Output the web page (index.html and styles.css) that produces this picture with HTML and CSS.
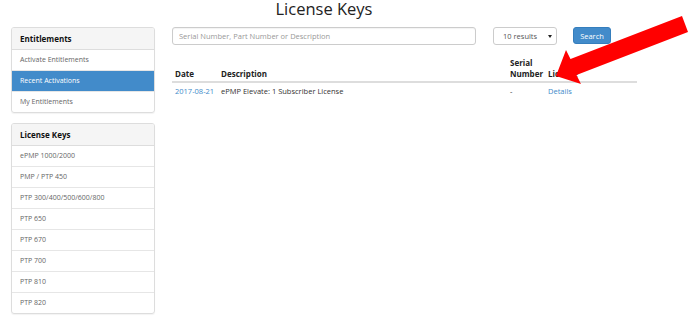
FILE: index.html
```html
<!DOCTYPE html>
<html lang="en">
<head>
  <meta charset="UTF-8">
  <title>License Keys</title>
  <link rel="stylesheet" href="styles.css">
</head>
<body>

<div class="page">
  <!-- Sidebar -->
  <div class="sidebar">
    <div class="panel">
      <div class="panel-heading">Entitlements</div>
      <a class="list-item" href="#">Activate Entitlements</a>
      <a class="list-item active" href="#">Recent Activations</a>
      <a class="list-item" href="#">My Entitlements</a>
    </div>

    <div class="panel">
      <div class="panel-heading">License Keys</div>
      <a class="list-item" href="#">ePMP 1000/2000</a>
      <a class="list-item" href="#">PMP / PTP 450</a>
      <a class="list-item" href="#">PTP 300/400/500/600/800</a>
      <a class="list-item" href="#">PTP 650</a>
      <a class="list-item" href="#">PTP 670</a>
      <a class="list-item" href="#">PTP 700</a>
      <a class="list-item" href="#">PTP 810</a>
      <a class="list-item" href="#">PTP 820</a>
    </div>
  </div>

  <!-- Main content -->
  <div class="main">
    <h1 class="title">License Keys</h1>

    <form class="search-row">
      <input class="search-input" type="text" placeholder="Serial Number, Part Number or Description">
      <div class="select">
        <span>10 results</span>
        <span class="caret"></span>
      </div>
      <button class="btn" type="submit">Search</button>
    </form>

    <table class="results">
      <colgroup>
        <col class="c-date">
        <col class="c-desc">
        <col class="c-serial">
        <col class="c-license">
      </colgroup>
      <thead>
        <tr>
          <th>Date</th>
          <th>Description</th>
          <th>Serial Number</th>
          <th>License</th>
        </tr>
      </thead>
      <tbody>
        <tr>
          <td><a href="#">2017-08-21</a></td>
          <td>ePMP Elevate: 1 Subscriber License</td>
          <td>-</td>
          <td><a href="#">Details</a></td>
        </tr>
      </tbody>
    </table>
  </div>
</div>

<!-- red annotation arrow -->
<svg class="arrow" width="690" height="327" viewBox="0 0 690 327">
  <polygon points="556,76 566,50 570.5,59 682,16 688,32 576.5,75 581,84" fill="#ff0000"/>
</svg>

</body>
</html>
```

FILE: styles.css
```css
/* Base */
body {
  margin: 0;
  font-family: "Open Sans", "Liberation Sans", sans-serif;
  color: #333;
  background-color: #fff;
}
a {
  color: #428bca;
  text-decoration: none;
}
.page {
  display: flex;
  gap: 17px;
  padding-left: 11px;
}

/* Sidebar panels */
.sidebar {
  width: 144px;
  padding-top: 27px;
}
.panel {
  border: 1px solid #ddd;
  border-radius: 3px;
  box-shadow: 0 1px 1px rgba(0, 0, 0, 0.05);
  margin-bottom: 10px;
  overflow: hidden;
}
.panel-heading {
  height: 21px;
  line-height: 21px;
  padding: 0 8px;
  background-color: #f5f5f5;
  border-bottom: 1px solid #ddd;
  font-size: 8px;
  font-weight: bold;
  color: #111;
}
.list-item {
  display: block;
  height: 20px;
  line-height: 20px;
  padding: 0 8px;
  border-bottom: 1px solid #e6e6e6;
  font-size: 7px;
  color: #666;
}
.list-item:last-child {
  border-bottom: none;
}
.list-item.active {
  background-color: #428bca;
  color: #fff;
}

/* Main */
.main {
  width: 466px;
}
.title {
  width: 304px;
  margin: 0;
  font-size: 16.5px;
  line-height: 18px;
  font-weight: normal;
  text-align: center;
  color: #222;
}
.search-row {
  display: flex;
  align-items: flex-start;
  margin: 9px 0 0;
}
.search-input {
  width: 304px;
  height: 18px;
  box-sizing: border-box;
  padding: 0 6px;
  border: 1px solid #ccc;
  border-radius: 3px;
  font-family: inherit;
  font-size: 7.5px;
  box-shadow: inset 0 1px 1px rgba(0, 0, 0, 0.05);
}
.search-input::placeholder {
  color: #999;
}
.select {
  display: flex;
  align-items: center;
  justify-content: space-between;
  width: 64px;
  height: 18px;
  box-sizing: border-box;
  margin-left: 17px;
  padding: 0 4px 0 9px;
  border: 1px solid #ccc;
  border-radius: 3px;
  font-size: 7.5px;
  color: #555;
}
.caret {
  width: 0;
  height: 0;
  border-left: 2px solid transparent;
  border-right: 2px solid transparent;
  border-top: 3px solid #222;
}
.btn {
  width: 38px;
  height: 17px;
  margin-left: 16px;
  padding: 0;
  border: 1px solid #357ebd;
  border-radius: 3px;
  background-color: #428bca;
  color: #fff;
  font-family: inherit;
  font-size: 7.5px;
}

/* Results table */
.results {
  width: 465px;
  margin-top: 10px;
  border-collapse: collapse;
  table-layout: fixed;
}
.c-date { width: 46px; }
.c-desc { width: 289px; }
.c-serial { width: 38px; }
.c-license { width: 92px; }
.results th {
  padding: 2px 3px 2px;
  border-bottom: 2px solid #ddd;
  font-size: 8px;
  line-height: 11px;
  font-weight: bold;
  text-align: left;
  vertical-align: bottom;
  color: #222;
}
.results td {
  padding: 3px 3px 2px;
  font-size: 7.5px;
  line-height: 11px;
  color: #333;
}

/* Annotation overlay */
.arrow {
  position: absolute;
  top: 0;
  left: 0;
  pointer-events: none;
}
```
